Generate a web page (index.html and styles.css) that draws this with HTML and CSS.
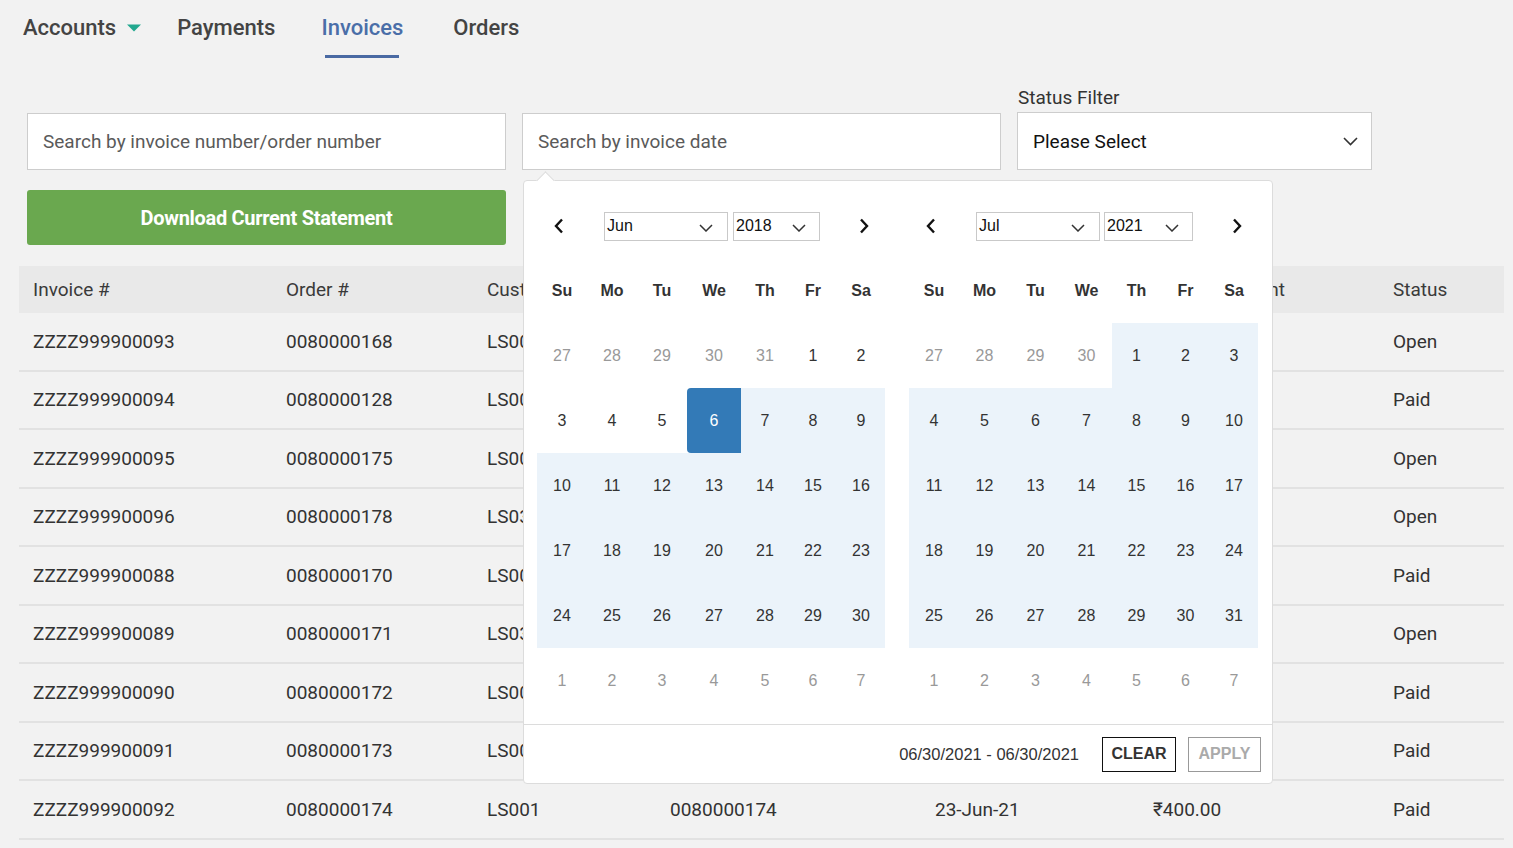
FILE: index.html
```html
<!DOCTYPE html>
<html lang="en">
<head>
<meta charset="utf-8">
<title>Invoices</title>
<link rel="stylesheet" href="styles.css">
</head>
<body>
<div class="page">
  <nav class="nav">
    <a class="nav-item nav-accounts">Accounts <svg class="caret" width="14" height="8" viewBox="0 0 14 8"><path d="M0 0.5h14L7 7.5z" fill="#22a88f"/></svg></a>
    <a class="nav-item nav-payments">Payments</a>
    <a class="nav-item nav-invoices active">Invoices</a>
    <a class="nav-item nav-orders">Orders</a>
  </nav>

  <div class="filters">
    <div class="field field-wide">
      <input class="text-input" type="text" placeholder="Search by invoice number/order number">
    </div>
    <div class="field field-wide date-field">
      <input class="text-input" type="text" placeholder="Search by invoice date">
      <div class="picker">
        <div class="picker-arrow"></div>
        <div class="calendars">
          <div class="cal cal-left">
            <div class="cal-head">
              <span class="nav-arrow"><svg width="12" height="16" viewBox="0 0 12 16"><path d="M9 1.5L3 8l6 6.5" stroke="#111" stroke-width="2.4" fill="none"/></svg></span>
              <div class="selects">
                <div class="mini-select month-select"><span>Jun</span><svg width="14" height="8" viewBox="0 0 14 8"><path d="M1 1l6 6 6-6" stroke="#333" stroke-width="1.5" fill="none"/></svg></div>
                <div class="mini-select year-select"><span>2018</span><svg width="14" height="8" viewBox="0 0 14 8"><path d="M1 1l6 6 6-6" stroke="#333" stroke-width="1.5" fill="none"/></svg></div>
              </div>
              <span class="nav-arrow"><svg width="12" height="16" viewBox="0 0 12 16"><path d="M3 1.5L9 8l-6 6.5" stroke="#111" stroke-width="2.4" fill="none"/></svg></span>
            </div>
            <div class="days days-left">
              <span class="dow">Su</span><span class="dow">Mo</span><span class="dow">Tu</span><span class="dow">We</span><span class="dow">Th</span><span class="dow">Fr</span><span class="dow">Sa</span>
              <span class="d off">27</span><span class="d off">28</span><span class="d off">29</span><span class="d off">30</span><span class="d off">31</span><span class="d">1</span><span class="d">2</span>
              <span class="d">3</span><span class="d">4</span><span class="d">5</span><span class="d start">6</span><span class="d in">7</span><span class="d in">8</span><span class="d in">9</span>
              <span class="d in">10</span><span class="d in">11</span><span class="d in">12</span><span class="d in">13</span><span class="d in">14</span><span class="d in">15</span><span class="d in">16</span>
              <span class="d in">17</span><span class="d in">18</span><span class="d in">19</span><span class="d in">20</span><span class="d in">21</span><span class="d in">22</span><span class="d in">23</span>
              <span class="d in">24</span><span class="d in">25</span><span class="d in">26</span><span class="d in">27</span><span class="d in">28</span><span class="d in">29</span><span class="d in">30</span>
              <span class="d off">1</span><span class="d off">2</span><span class="d off">3</span><span class="d off">4</span><span class="d off">5</span><span class="d off">6</span><span class="d off">7</span>
            </div>
          </div>
          <div class="cal cal-right">
            <div class="cal-head">
              <span class="nav-arrow"><svg width="12" height="16" viewBox="0 0 12 16"><path d="M9 1.5L3 8l6 6.5" stroke="#111" stroke-width="2.4" fill="none"/></svg></span>
              <div class="selects">
                <div class="mini-select month-select"><span>Jul</span><svg width="14" height="8" viewBox="0 0 14 8"><path d="M1 1l6 6 6-6" stroke="#333" stroke-width="1.5" fill="none"/></svg></div>
                <div class="mini-select year-select year-wide"><span>2021</span><svg width="14" height="8" viewBox="0 0 14 8"><path d="M1 1l6 6 6-6" stroke="#333" stroke-width="1.5" fill="none"/></svg></div>
              </div>
              <span class="nav-arrow"><svg width="12" height="16" viewBox="0 0 12 16"><path d="M3 1.5L9 8l-6 6.5" stroke="#111" stroke-width="2.4" fill="none"/></svg></span>
            </div>
            <div class="days days-right">
              <span class="dow">Su</span><span class="dow">Mo</span><span class="dow">Tu</span><span class="dow">We</span><span class="dow">Th</span><span class="dow">Fr</span><span class="dow">Sa</span>
              <span class="d off">27</span><span class="d off">28</span><span class="d off">29</span><span class="d off">30</span><span class="d in">1</span><span class="d in">2</span><span class="d in">3</span>
              <span class="d in">4</span><span class="d in">5</span><span class="d in">6</span><span class="d in">7</span><span class="d in">8</span><span class="d in">9</span><span class="d in">10</span>
              <span class="d in">11</span><span class="d in">12</span><span class="d in">13</span><span class="d in">14</span><span class="d in">15</span><span class="d in">16</span><span class="d in">17</span>
              <span class="d in">18</span><span class="d in">19</span><span class="d in">20</span><span class="d in">21</span><span class="d in">22</span><span class="d in">23</span><span class="d in">24</span>
              <span class="d in">25</span><span class="d in">26</span><span class="d in">27</span><span class="d in">28</span><span class="d in">29</span><span class="d in">30</span><span class="d in">31</span>
              <span class="d off">1</span><span class="d off">2</span><span class="d off">3</span><span class="d off">4</span><span class="d off">5</span><span class="d off">6</span><span class="d off">7</span>
            </div>
          </div>
        </div>
        <div class="picker-foot">
          <span class="range-text">06/30/2021 - 06/30/2021</span>
          <button class="btn-clear">CLEAR</button>
          <button class="btn-apply">APPLY</button>
        </div>
      </div>
    </div>
    <div class="field field-status">
      <label class="field-label">Status Filter</label>
      <div class="select-box"><span>Please Select</span><svg width="15" height="9" viewBox="0 0 15 9"><path d="M1 1l6.5 6.5L14 1" stroke="#333" stroke-width="1.6" fill="none"/></svg></div>
    </div>
  </div>

  <button class="download-btn">Download Current Statement</button>

  <div class="table">
    <div class="tr th"><span>Invoice #</span><span>Order #</span><span>Customer #</span><span></span><span></span><span>Invoice Amount</span><span>Status</span></div>
    <div class="tr"><span>ZZZZ999900093</span><span>0080000168</span><span>LS001</span><span></span><span></span><span></span><span>Open</span></div>
    <div class="tr"><span>ZZZZ999900094</span><span>0080000128</span><span>LS001</span><span></span><span></span><span></span><span>Paid</span></div>
    <div class="tr"><span>ZZZZ999900095</span><span>0080000175</span><span>LS001</span><span></span><span></span><span></span><span>Open</span></div>
    <div class="tr"><span>ZZZZ999900096</span><span>0080000178</span><span>LS031</span><span></span><span></span><span></span><span>Open</span></div>
    <div class="tr"><span>ZZZZ999900088</span><span>0080000170</span><span>LS001</span><span></span><span></span><span></span><span>Paid</span></div>
    <div class="tr"><span>ZZZZ999900089</span><span>0080000171</span><span>LS031</span><span></span><span></span><span></span><span>Open</span></div>
    <div class="tr"><span>ZZZZ999900090</span><span>0080000172</span><span>LS001</span><span></span><span></span><span></span><span>Paid</span></div>
    <div class="tr"><span>ZZZZ999900091</span><span>0080000173</span><span>LS001</span><span></span><span></span><span></span><span>Paid</span></div>
    <div class="tr"><span>ZZZZ999900092</span><span>0080000174</span><span>LS001</span><span>0080000174</span><span>23-Jun-21</span><span>₹400.00</span><span>Paid</span></div>
  </div>
</div>
</body>
</html>
```
FILE: styles.css
```css
* { box-sizing: border-box; }
html, body { margin: 0; padding: 0; }
body {
  background: #f2f2f2;
  font-family: Roboto, "Liberation Sans", sans-serif;
  color: #333;
  width: 1513px;
  height: 848px;
  overflow: hidden;
}
.page { padding: 0 9px 0 19px; }

/* nav */
.nav {
  display: flex;
  align-items: flex-start;
  padding: 13px 0 0 4px;
  height: 58px;
}
.nav-item {
  font-size: 22px;
  font-weight: 500;
  line-height: 30px;
  color: #444;
  display: flex;
  flex-direction: column;
  align-items: stretch;
  cursor: pointer;
}
.nav-accounts { flex-direction: row; align-items: center; }
.caret { margin-left: 11px; margin-top: 0; }
.nav-payments { margin-left: 36px; }
.nav-invoices { margin-left: 46px; color: #4a6ea8; }
.nav-orders { margin-left: 50px; }
.nav-item.active::after {
  content: "";
  display: block;
  height: 3px;
  margin: 12px 4px 0;
  background: #4a6aa3;
}

/* filters */
.filters {
  display: flex;
  align-items: flex-end;
  gap: 16px;
  margin-top: 28px;
  padding-left: 8px;
}
.field { display: flex; flex-direction: column; }
.field-wide { width: 479px; }
.field-status { width: 355px; }
.date-field { position: relative; }
.text-input {
  width: 100%;
  height: 57px;
  border: 1px solid #cdcdcd;
  background: #fff;
  padding: 0 15px;
  font-family: Roboto, "Liberation Sans", sans-serif;
  font-size: 19px;
  color: #333;
  outline: none;
}
.text-input::placeholder { color: #5a5a5a; }
.field-label {
  font-size: 19px;
  line-height: 24px;
  color: #333;
  margin: 0 0 2px 1px;
}
.select-box {
  height: 58px;
  border: 1px solid #cdcdcd;
  background: #fff;
  display: flex;
  align-items: center;
  justify-content: space-between;
  padding: 0 13px 0 15px;
  font-size: 19px;
  color: #111;
}

/* download button */
.download-btn {
  display: block;
  margin: 20px 0 0 8px;
  width: 479px;
  height: 55px;
  border: none;
  border-radius: 3px;
  background: #6aa84f;
  color: #fff;
  font-family: Roboto, "Liberation Sans", sans-serif;
  font-weight: 700;
  font-size: 20px;
  letter-spacing: -0.3px;
}

/* table */
.table { margin-top: 21px; width: 1485px; }
.tr {
  display: grid;
  grid-template-columns: 253px 201px 183px 265px 218px 240px 1fr;
  align-items: center;
  height: 58.5px;
  border-bottom: 2px solid #e2e2e2;
  font-size: 19px;
  color: #333;
}
.tr span { padding-left: 14px; white-space: nowrap; }
.tr.th {
  height: 47px;
  background: #e9e9e9;
  border-bottom: none;
  color: #3a3a3a;
}

/* date picker */
.picker {
  position: absolute;
  left: 1px;
  top: calc(100% + 10px);
  width: 750px;
  background: #fff;
  border: 1px solid #dcdcdc;
  border-radius: 4px;
  z-index: 10;
  font-family: "Liberation Sans", Arial, sans-serif;
  color: #333;
}
.picker-arrow {
  position: absolute;
  left: 15px;
  top: -7px;
  width: 13px;
  height: 13px;
  background: #fff;
  border-top: 1px solid #dcdcdc;
  border-left: 1px solid #dcdcdc;
  transform: rotate(45deg);
}
.calendars {
  display: flex;
  gap: 24px;
  padding: 13px 13px 11px;
}
.cal-left { width: 348px; }
.cal-right { width: 349px; }
.cal-head {
  height: 64px;
  display: flex;
  align-items: center;
  justify-content: space-between;
}
.nav-arrow {
  width: 44px;
  display: flex;
  justify-content: center;
  align-items: center;
}
.cal-head .nav-arrow:last-child { width: 42px; }
.selects { display: flex; gap: 5px; }
.cal-right .selects { gap: 4px; }
.mini-select {
  height: 29px;
  border: 1px solid #c9c9c9;
  display: flex;
  align-items: center;
  justify-content: space-between;
  font-size: 16px;
  color: #111;
  background: #fff;
}
.month-select { width: 124px; padding: 0 14px 0 2px; }
.year-select { width: 87px; padding: 0 13px 0 2px; }
.year-wide { width: 89px; }
.mini-select svg { margin-top: 4px; }

.days {
  display: grid;
  grid-auto-rows: 65px;
  grid-template-rows: 65px;
}
.days-left { grid-template-columns: 50px 50px 50px 54px 48px 48px 48px; }
.days-right { grid-template-columns: 50px 51px 51px 51px 49px 49px 48px; }
.dow, .d {
  display: flex;
  align-items: center;
  justify-content: center;
  font-size: 16px;
}
.dow { font-weight: 700; color: #333; }
.d { color: #333; }
.d.off { color: #999; }
.d.in { background: #ebf3fa; }
.d.start { background: #337ab7; color: #fff; border-radius: 4px 0 0 4px; }

.picker-foot {
  border-top: 1px solid #dcdcdc;
  height: 59px;
  display: flex;
  align-items: center;
  justify-content: flex-end;
  padding: 0 11px;
  gap: 12px;
}
.range-text { font-size: 16.5px; color: #333; margin-right: 11px; }
.btn-clear, .btn-apply {
  font-family: "Liberation Sans", Arial, sans-serif;
  font-weight: 700;
  font-size: 16px;
  height: 35px;
  background: #fff;
  padding: 0;
}
.btn-clear { width: 74px; border: 1px solid #111; color: #333; }
.btn-apply { width: 73px; border: 1px solid #999; color: #aaa; }
```
